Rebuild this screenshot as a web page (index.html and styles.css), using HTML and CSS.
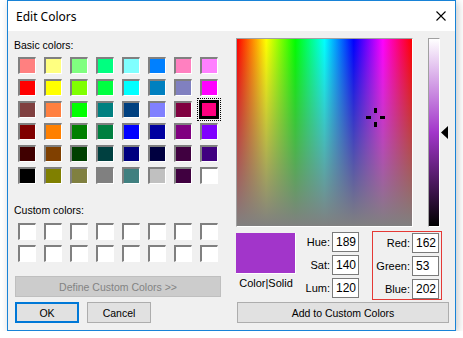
FILE: index.html
```html
<!DOCTYPE html>
<html>
<head>
  <title>Edit Colors</title>
  <link rel="stylesheet" href="styles.css">
</head>
<body>
  <div class="dialog">
    <div class="titlebar">
      <span class="title">Edit Colors</span>
      <svg class="close" width="10" height="10" viewBox="0 0 10 10">
        <path d="M0.5 0.5 L9.5 9.5 M9.5 0.5 L0.5 9.5" stroke="#000" stroke-width="1.1" fill="none"/>
      </svg>
    </div>

    <div class="content">
      <div class="left">
        <div class="label">Basic colors:</div>
        <div class="swatches">
          <span class="swatch" style="background:#ff8080"></span>
          <span class="swatch" style="background:#ffff80"></span>
          <span class="swatch" style="background:#80ff80"></span>
          <span class="swatch" style="background:#00ff80"></span>
          <span class="swatch" style="background:#80ffff"></span>
          <span class="swatch" style="background:#0080ff"></span>
          <span class="swatch" style="background:#ff80c0"></span>
          <span class="swatch" style="background:#ff80ff"></span>

          <span class="swatch" style="background:#ff0000"></span>
          <span class="swatch" style="background:#ffff00"></span>
          <span class="swatch" style="background:#80ff00"></span>
          <span class="swatch" style="background:#00ff40"></span>
          <span class="swatch" style="background:#00ffff"></span>
          <span class="swatch" style="background:#0080c0"></span>
          <span class="swatch" style="background:#8080c0"></span>
          <span class="swatch" style="background:#ff00ff"></span>

          <span class="swatch" style="background:#804040"></span>
          <span class="swatch" style="background:#ff8040"></span>
          <span class="swatch" style="background:#00ff00"></span>
          <span class="swatch" style="background:#008080"></span>
          <span class="swatch" style="background:#004080"></span>
          <span class="swatch" style="background:#8080ff"></span>
          <span class="swatch" style="background:#800040"></span>
          <span class="swatch selected" style="background:#ff0080"></span>

          <span class="swatch" style="background:#800000"></span>
          <span class="swatch" style="background:#ff8000"></span>
          <span class="swatch" style="background:#008000"></span>
          <span class="swatch" style="background:#008040"></span>
          <span class="swatch" style="background:#0000ff"></span>
          <span class="swatch" style="background:#0000a0"></span>
          <span class="swatch" style="background:#800080"></span>
          <span class="swatch" style="background:#8000ff"></span>

          <span class="swatch" style="background:#400000"></span>
          <span class="swatch" style="background:#804000"></span>
          <span class="swatch" style="background:#004000"></span>
          <span class="swatch" style="background:#004040"></span>
          <span class="swatch" style="background:#000080"></span>
          <span class="swatch" style="background:#000040"></span>
          <span class="swatch" style="background:#400040"></span>
          <span class="swatch" style="background:#400080"></span>

          <span class="swatch" style="background:#000000"></span>
          <span class="swatch" style="background:#808000"></span>
          <span class="swatch" style="background:#808040"></span>
          <span class="swatch" style="background:#808080"></span>
          <span class="swatch" style="background:#408080"></span>
          <span class="swatch" style="background:#c0c0c0"></span>
          <span class="swatch" style="background:#400040"></span>
          <span class="swatch" style="background:#ffffff"></span>
        </div>

        <div class="label custom-label">Custom colors:</div>
        <div class="swatches custom">
          <span class="swatch"></span><span class="swatch"></span><span class="swatch"></span><span class="swatch"></span>
          <span class="swatch"></span><span class="swatch"></span><span class="swatch"></span><span class="swatch"></span>
          <span class="swatch"></span><span class="swatch"></span><span class="swatch"></span><span class="swatch"></span>
          <span class="swatch"></span><span class="swatch"></span><span class="swatch"></span><span class="swatch"></span>
        </div>

        <button class="btn define" disabled>Define Custom Colors &gt;&gt;</button>
        <div class="actions">
          <button class="btn ok">OK</button>
          <button class="btn cancel">Cancel</button>
        </div>
      </div>

      <div class="right">
        <div class="picker">
          <div class="spectrum">
            <svg class="crosshair" width="19" height="19" viewBox="0 0 19 19">
              <rect x="8" y="0" width="3" height="5" fill="#000"/>
              <rect x="8" y="14" width="3" height="5" fill="#000"/>
              <rect x="0" y="8" width="5" height="3" fill="#000"/>
              <rect x="14" y="8" width="5" height="3" fill="#000"/>
            </svg>
          </div>
          <div class="lum-wrap">
            <div class="lum"></div>
            <svg class="lum-arrow" width="7" height="13" viewBox="0 0 7 13">
              <polygon points="7,0 0,6.5 7,13" fill="#000"/>
            </svg>
          </div>
        </div>

        <div class="values">
          <div class="preview-col">
            <div class="preview"></div>
            <div class="preview-label">Color|Solid</div>
          </div>
          <div class="fields hsl">
            <span class="field-label">Hue:</span><input class="field" type="text" value="189">
            <span class="field-label">Sat:</span><input class="field" type="text" value="140">
            <span class="field-label">Lum:</span><input class="field" type="text" value="120">
          </div>
          <div class="fields rgb">
            <span class="field-label">Red:</span><input class="field" type="text" value="162">
            <span class="field-label">Green:</span><input class="field" type="text" value="53">
            <span class="field-label">Blue:</span><input class="field" type="text" value="202">
          </div>
        </div>

        <button class="btn add">Add to Custom Colors</button>
      </div>
    </div>
  </div>
</body>
</html>
```

FILE: styles.css
```css
:root {
  --color-accent: #1883d7;
  --color-face: #f0f0f0;
  --color-button: #e1e1e1;
  --color-button-border: #adadad;
  --color-shade: #808080;
  --color-current: #a235ca;

  --font-dialog: "Liberation Sans", Arial, sans-serif;
  --font-title: "Noto Sans", "Liberation Sans", sans-serif;
}

* {
  box-sizing: border-box;
}

body {
  margin: 0;
  background-color: #fff;
  font-family: var(--font-dialog);
  font-size: 10.5px;
  color: #000;
}

.dialog {
  margin-left: 7px;
  width: 449px;
  height: 331px;
  border: 1px solid var(--color-accent);
  background-color: var(--color-face);
  box-shadow: 2px 2px 8px rgba(0,0,0,0.22);
  display: flex;
  flex-direction: column;
}

.titlebar {
  height: 30px;
  background-color: #fff;
  display: flex;
  align-items: center;
  justify-content: space-between;
  padding: 0 9px 0 8px;
  flex-shrink: 0;
}

.title {
  font-family: var(--font-title);
  font-size: 12px;
}

.content {
  display: flex;
  gap: 15px;
  padding: 7px 6px 0 6px;
}

/* Left side: palettes and buttons */
.left {
  width: 207px;
  display: flex;
  flex-direction: column;
}

.label {
  line-height: 13px;
  margin-top: 1px;
}

.custom-label {
  margin-top: 20px;
}

.swatches {
  display: grid;
  grid-template-columns: repeat(8, 18px);
  grid-auto-rows: 17px;
  column-gap: 8px;
  row-gap: 5px;
  margin: 5px 0 0 4px;
}

.swatches.custom {
  margin-top: 6px;
}

.swatch {
  position: relative;
  background-color: #fff;
  border-style: solid;
  border-width: 2px 1px 1px 2px;
  border-color: var(--color-shade) #fff #fff var(--color-shade);
}

.swatch.selected {
  border-color: #000;
  border-width: 2px;
  box-shadow: 0 0 0 1px #000;
}

.swatch.selected:after {
  content: "";
  position: absolute;
  top: -5px;
  left: -5px;
  right: -5px;
  bottom: -5px;
  border: 1px dotted #000;
}

.btn {
  font-family: var(--font-dialog);
  font-size: 10.5px;
  color: #000;
  height: 21px;
  background-color: var(--color-button);
  border: 1px solid var(--color-button-border);
  padding: 0;
}

.define {
  margin: 14px 0 0 1px;
  width: 206px;
  background-color: #cccccc;
  border-color: #bfbfbf;
  color: #838383;
}

.actions {
  display: flex;
  gap: 8px;
  margin: 5px 0 0 1px;
}

.ok,
.cancel {
  width: 64px;
}

.ok {
  border: 2px solid #0078d7;
}

/* Right side: spectrum and values */
.right {
  width: 213px;
  display: flex;
  flex-direction: column;
}

.picker {
  display: flex;
  align-items: flex-start;
}

.spectrum {
  position: relative;
  width: 177px;
  height: 189px;
  border-style: solid;
  border-width: 1px;
  border-color: #a0a0a0 #fff #fff #a0a0a0;
  background:
    linear-gradient(to bottom, rgba(128,128,128,0), #808080),
    linear-gradient(to right, #f00, #ff0, #0f0, #0ff, #00f, #f0f, #f00);
}

.crosshair {
  position: absolute;
  left: 129px;
  top: 69px;
}

.lum-wrap {
  display: flex;
  align-items: center;
  height: 189px;
  margin-left: 15px;
}

.lum {
  width: 12px;
  height: 189px;
  border-style: solid;
  border-width: 1px;
  border-color: #a0a0a0 #fff #fff #a0a0a0;
  background: linear-gradient(to bottom, #fff, var(--color-current) 50%, #000);
}

.lum-arrow {
  margin-left: 1px;
}

.values {
  display: flex;
  align-items: flex-start;
  margin-top: 4px;
}

.preview-col {
  width: 60px;
  margin-top: 2px;
}

.preview {
  height: 41px;
  background-color: var(--color-current);
  border-right: 1px solid #fff;
  border-bottom: 1px solid #fff;
}

.preview-label {
  margin-top: 3px;
  line-height: 13px;
  text-align: center;
  font-size: 11px;
}

.fields {
  display: grid;
  grid-auto-rows: 20px;
  column-gap: 2px;
  row-gap: 3px;
  align-items: center;
  font-size: 11px;
}

.hsl {
  grid-template-columns: 30px 27px;
  margin: 1px 0 0 4px;
}

.rgb {
  grid-template-columns: 34px 27px;
  margin-left: 13px;
  padding: 1px 2px 0 3px;
  border: 1px solid #e53935;
}

.field-label {
  text-align: right;
}

.field {
  width: 27px;
  height: 20px;
  margin: 0;
  padding: 0 0 0 3px;
  border: 1px solid #7a7a7a;
  background-color: #fff;
  font-family: var(--font-dialog);
  font-size: 12px;
  color: #000;
  outline: none;
}

.add {
  margin: 2px 0 0 1px;
  width: 212px;
}
```
